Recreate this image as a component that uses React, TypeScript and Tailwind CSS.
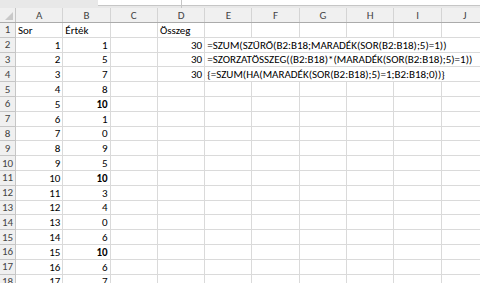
import type { ReactNode } from 'react';

const COLS = ['A', 'B', 'C', 'D', 'E', 'F', 'G', 'H', 'I', 'J'];
const COL_W = 47.3;
const ROW_H = 14.8;

type Cell = { text: ReactNode; align?: 'left' | 'right'; bold?: boolean; span?: number };

const values = [1, 5, 7, 8, 10, 1, 0, 9, 5, 10, 3, 4, 0, 6, 10, 6, 7];

const formulas: Record<number, { text: string; span: number }> = {
  2: { text: '=SZUM(SZŰRŐ(B2:B18;MARADÉK(SOR(B2:B18);5)=1))', span: 6 },
  3: { text: '=SZORZATÖSSZEG((B2:B18)*(MARADÉK(SOR(B2:B18);5)=1))', span: 6 },
  4: { text: '{=SZUM(HA(MARADÉK(SOR(B2:B18);5)=1;B2:B18;0))}', span: 6 },
};

function buildRow(r: number): (Cell | null)[] {
  const cells: (Cell | null)[] = Array(10).fill(null);
  if (r === 1) {
    cells[0] = { text: 'Sor' };
    cells[1] = { text: 'Érték' };
    cells[3] = { text: 'Összeg' };
    return cells;
  }
  const v = values[r - 2];
  cells[0] = { text: r - 1, align: 'right' };
  cells[1] = { text: v, align: 'right', bold: v === 10 };
  const f = formulas[r];
  if (f) {
    cells[3] = { text: 30, align: 'right' };
    cells[4] = { text: f.text, span: f.span };
  }
  return cells;
}

function Row({ r }: { r: number }) {
  const cells = buildRow(r);
  const out: ReactNode[] = [];
  for (let c = 0; c < 10; c++) {
    const cell = cells[c];
    const span = cell?.span ?? 1;
    out.push(
      <div
        key={c}
        className={`flex-none flex items-end pb-px border-r border-b border-[#dadada] px-[2px] whitespace-nowrap overflow-visible ${
          cell?.align === 'right' ? 'justify-end' : 'justify-start'
        } ${cell?.bold ? 'font-bold' : ''}`}
        style={{ width: COL_W * span, height: ROW_H }}
      >
        {cell ? cell.text : null}
      </div>
    );
    c += span - 1;
  }
  return (
    <div className="flex">
      <div
        className="flex-none w-[16px] flex items-center justify-center border-r border-b border-[#c6c6c6] bg-[#f0f0f0] text-[#444]"
        style={{ height: ROW_H }}
      >
        {r}
      </div>
      {out}
    </div>
  );
}

export default function App() {
  const rows = Array.from({ length: 18 }, (_, i) => i + 1);
  return (
    <div
      className="w-[480px] h-[283px] overflow-hidden bg-white text-[11px] leading-none text-black"
      style={{ fontFamily: 'Carlito, Lato, "Liberation Sans", sans-serif' }}
    >
      {/* formula bar edge */}
      <div className="flex h-[8px] bg-[#e8e8e8]">
        <div className="w-[98px] flex-none" />
        <div className="w-[83px] flex-none bg-white border-b border-[#c6c6c6] h-[6px]" />
        <div className="w-px flex-none bg-[#c6c6c6]" />
        <div className="flex-1 bg-white border-b border-[#c6c6c6] h-[6px]" />
      </div>

      {/* column headers */}
      <div className="flex h-[15px] bg-[#f0f0f0] border-b border-[#ababab] text-[#444]">
        <div className="relative flex-none w-[16px] border-r border-[#c6c6c6]">
          <svg className="absolute right-[2px] bottom-[2px]" width="8" height="8" viewBox="0 0 8 8">
            <polygon points="8,0 8,8 0,8" fill="#c9c9c9" />
          </svg>
        </div>
        {COLS.map((c) => (
          <div
            key={c}
            className="flex-none flex items-center justify-center border-r border-[#d4d4d4]"
            style={{ width: COL_W }}
          >
            {c}
          </div>
        ))}
      </div>

      {rows.map((r) => (
        <Row key={r} r={r} />
      ))}
    </div>
  );
}
